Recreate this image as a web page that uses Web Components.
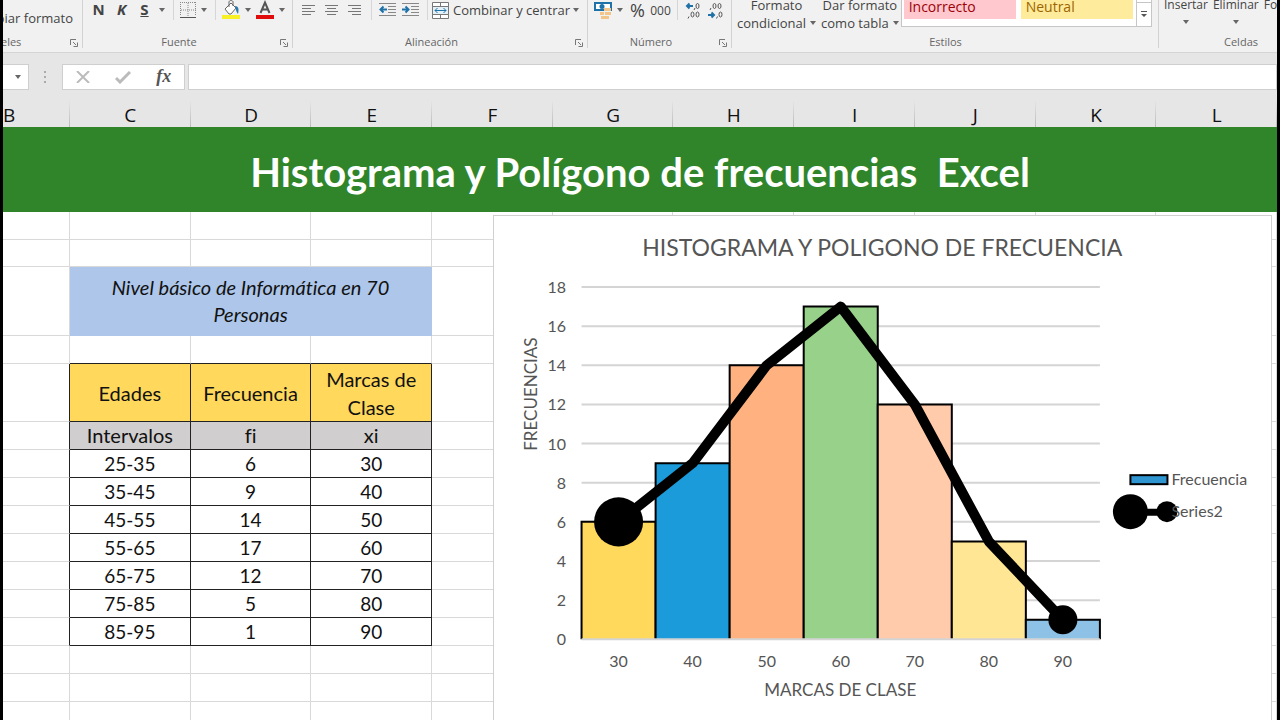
<!DOCTYPE html>
<html lang="es">
<head>
<meta charset="utf-8">
<meta name="viewport" content="width=device-width, initial-scale=1">
<title>Histograma y Polígono de frecuencias Excel</title>
<style>
  body {
    margin: 0;
    font-family: "Open Sans", "Noto Sans", sans-serif;
    font-variant-ligatures: none;
  }
</style>
</head>
<body>
<excel-window></excel-window>

<script>
const makeTemplate = (html) => {
  const template = document.createElement('template');
  template.innerHTML = html;
  return template;
};

class BaseElement extends HTMLElement {
  constructor() {
    super();
    this.attachShadow({ mode: 'open' });
    this.shadowRoot.appendChild(this.constructor.template.content.cloneNode(true));
  }
}

// Small drop-down arrow used all over the ribbon
class DropArrow extends BaseElement {
  static template = makeTemplate(`
    <style>
      :host { display: inline-flex; }
      button {
        display: flex;
        align-items: center;
        justify-content: center;
        width: 12px;
        height: 16px;
        padding: 0;
        border: 0;
        background: none;
      }
    </style>
    <button aria-label="Más opciones">
      <svg width="6" height="4" viewBox="0 0 6 4"><path d="M0 0h6L3 4z" fill="#666"/></svg>
    </button>
  `);
}

// One icon or letter button
class ToolButton extends BaseElement {
  static template = makeTemplate(`
    <style>
      :host { display: inline-flex; width: 23px; }
      :host([size="s"]) { width: 20px; }
      :host([size="m"]) { width: 22px; }
      :host([size="auto"]) { width: auto; }
      button {
        display: flex;
        flex: 1;
        align-items: center;
        justify-content: center;
        gap: 4px;
        height: 20px;
        padding: 0;
        border: 0;
        background: none;
        color: #444;
        font: inherit;
        white-space: nowrap;
      }
    </style>
    <button><slot></slot></button>
  `);

  connectedCallback() {
    if (this.title) {
      this.shadowRoot.querySelector('button').setAttribute('aria-label', this.title);
    }
  }
}

// Ribbon group: tools on top, caption and dialog launcher below
class RibbonGroup extends BaseElement {
  static template = makeTemplate(`
    <style>
      :host {
        display: flex;
        flex-direction: column;
        position: relative;
        color: #444;
        font-size: 13px;
      }
      :host::after {
        content: "";
        position: absolute;
        right: 0;
        top: 0;
        bottom: 4px;
        border-right: 1px solid #d2d2d2;
      }
      .tools { display: flex; height: 34px; box-sizing: border-box; }
      .caption {
        display: flex;
        align-items: center;
        height: 18px;
        color: #666;
        font-size: 11px;
        line-height: 14px;
      }
      .caption span { flex: 1; padding-bottom: 2px; text-align: center; }
      button {
        display: flex;
        width: 18px;
        padding: 0 0 0 5px;
        border: 0;
        background: none;
      }
      :host([plain]) button { display: none; }
    </style>
    <div class="tools"><slot></slot></div>
    <div class="caption">
      <span></span>
      <button aria-label="Opciones del grupo">
        <svg width="8" height="8" viewBox="0 0 8 8" fill="none" stroke="#777">
          <path d="M.5 6V.5H6M3 3l3 3M7.500 3.500v4h-4"/>
        </svg>
      </button>
    </div>
  `);

  connectedCallback() {
    this.shadowRoot.querySelector('span').textContent = this.getAttribute('label');
  }
}

class ExcelRibbon extends BaseElement {
  static template = makeTemplate(`
    <style>
      :host {
        display: block;
        overflow: hidden;
        background: #f1f1f1;
        border-bottom: 1px solid #d5d5d5;
      }
      .groups { display: flex; margin-left: -93px; }
      ribbon-group { flex: none; }
      .clipboard { width: 173px; }
      .font { width: 210px; }
      .align { width: 295px; }
      .number { width: 144px; }
      .styles { width: 427px; }
      .cells { width: 164px; font-size: 12px; }
      .row { display: flex; align-items: center; height: 20px; padding-left: 4px; }
      .copy { display: flex; flex: 1; align-items: center; justify-content: flex-end; padding: 2px 10px 0 0; }
      .sep { width: 10px; height: 20px; background: linear-gradient(#d6d6d6, #d6d6d6) center / 1px 100% no-repeat; }
      b, i, u { font-size: 15px; font-weight: 700; line-height: 18px; padding-bottom: 2px; }
      .percent { font-size: 18px; }
      .zeros { font-size: 12px; }
      .big {
        display: flex;
        flex-direction: column;
        align-items: center;
        margin-top: -4px;
        padding: 0;
        border: 0;
        background: none;
        color: #444;
        font: inherit;
        line-height: 18px;
        white-space: nowrap;
      }
      .big span { display: flex; align-items: center; gap: 4px; }
      .big svg { margin: 6px; }
      .big span svg { margin: 0; }
      .styles .big { margin-left: 5px; }
      .gallery {
        display: flex;
        height: 26px;
        margin-left: 2px;
        border: 1px solid #c6c6c6;
        border-top: 0;
        background: #fff;
      }
      .gallery button { border: 0; padding: 0 5px 5px; font-size: 14px; font-family: inherit; text-align: left; line-height: 14px; }
      .swatch { width: 112px; height: 19px; margin: 0 3px 0 2px; }
      .bad { background: #ffc7ce; color: #9c0006; }
      .neutral { background: #ffeb9c; color: #9c6500; }
      .gallery .more {
        display: flex;
        align-items: center;
        justify-content: center;
        width: 15px;
        padding: 2px 0 0;
        border-left: 1px solid #c6c6c6;
        background: linear-gradient(#c6c6c6, #c6c6c6) 0 2px / 100% 1px no-repeat #fff;
      }
      .cells .big { margin-left: 5px; }
    </style>
    <div class="groups">
      <ribbon-group class="clipboard" label="Portapapeles">
        <div class="copy"><tool-button size="auto">Copiar formato</tool-button></div>
      </ribbon-group>

      <ribbon-group class="font" label="Fuente">
        <div class="row">
          <tool-button title="Negrita"><b>N</b></tool-button>
          <tool-button title="Cursiva"><i>K</i></tool-button>
          <tool-button title="Subrayado"><u>S</u></tool-button>
          <drop-arrow></drop-arrow>
          <div class="sep"></div>
          <tool-button size="s" title="Bordes">
            <svg width="16" height="16" viewBox="0 0 16 16" fill="none">
              <path d="M.5 0v14M15.500 0v14M0 .5h16M8 1v14M1 8h15" stroke="#888" stroke-dasharray="1 1"/>
              <path d="M0 15.500h16" stroke="#555"/>
            </svg>
          </tool-button>
          <drop-arrow></drop-arrow>
          <div class="sep"></div>
          <tool-button size="m" title="Color de relleno">
            <svg width="18" height="20" viewBox="0 0 18 20">
              <path d="M3 9l6-6 5 5-5 6H7z" fill="#fff" stroke="#666"/>
              <path d="M7 7V2c0-2 4-2 4 0v4" fill="none" stroke="#666"/>
              <path d="M13 6c4 0 4 4 3 8-2-2-2-5-3-8z" fill="#2a7ab0"/>
              <path d="M0 15h18v4H0z" fill="#f7f026"/>
            </svg>
          </tool-button>
          <drop-arrow></drop-arrow>
          <tool-button size="m" title="Color de fuente">
            <svg width="18" height="20" viewBox="0 0 18 20">
              <path d="M4.500 13L9 2.500 13.500 13M6 9.500h6" fill="none" stroke="#555" stroke-width="2"/>
              <path d="M0 15h18v4H0z" fill="#e00b0b"/>
            </svg>
          </tool-button>
          <drop-arrow></drop-arrow>
        </div>
      </ribbon-group>

      <ribbon-group class="align" label="Alineación">
        <div class="row">
          <tool-button title="Alinear a la izquierda">
            <svg width="13" height="12" viewBox="0 0 13 12" stroke="#777"><path d="M0 1.500h13M0 4.500h9M0 7.500h13M0 10.500h9"/></svg>
          </tool-button>
          <tool-button title="Centrar">
            <svg width="13" height="12" viewBox="0 0 13 12" stroke="#777"><path d="M0 1.500h13M2 4.500h9M0 7.500h13M2 10.500h9"/></svg>
          </tool-button>
          <tool-button title="Alinear a la derecha">
            <svg width="13" height="12" viewBox="0 0 13 12" stroke="#777"><path d="M0 1.500h13M4 4.500h9M0 7.500h13M4 10.500h9"/></svg>
          </tool-button>
          <div class="sep"></div>
          <tool-button title="Disminuir sangría">
            <svg width="17" height="14" viewBox="0 0 17 14" fill="none" stroke="#888">
              <path d="M0 .5h17M9 3.500h8M9 6.500h8M9 9.500h8M0 12.500h17"/>
              <path d="M8 6.500H2M4.500 3.500L1.500 6.500l3 3" stroke="#1f72a8" stroke-width="2"/>
            </svg>
          </tool-button>
          <tool-button title="Aumentar sangría">
            <svg width="17" height="14" viewBox="0 0 17 14" fill="none" stroke="#888">
              <path d="M0 .5h17M9 3.500h8M9 6.500h8M9 9.500h8M0 12.500h17"/>
              <path d="M0 6.500h6M3.500 3.500l3 3-3 3" stroke="#1f72a8" stroke-width="2"/>
            </svg>
          </tool-button>
          <div class="sep"></div>
          <tool-button size="auto">
            <svg width="17" height="17" viewBox="0 0 17 17" fill="none" stroke="#777">
              <path d="M.5.5h16v16H.5zM8.500 0v4M8.500 13v4" fill="#fff"/>
              <path d="M.5 4.500h16v8H.5z" fill="#e3f0f8"/>
              <path d="M3 8.500h11M5.500 6L3 8.500 5.500 11M11.500 6L14 8.500 11.500 11" stroke="#1f72a8"/>
            </svg>
            Combinar y centrar
          </tool-button>
          <drop-arrow></drop-arrow>
        </div>
      </ribbon-group>

      <ribbon-group class="number" label="Número">
        <div class="row">
          <tool-button size="m" title="Formato de número de contabilidad">
            <svg width="18" height="18" viewBox="0 0 18 18">
              <path d="M0 1h18v9H0z" fill="#1f72a8"/>
              <path d="M2 3h14v5H2z" fill="#fff"/>
              <circle cx="8" cy="5.500" r="2.500" fill="#1f72a8"/>
              <path d="M10 7h7v3h-7zM6 11h4v3H6zM11 11h6v3h-6zM7 15h8v3H7z" fill="#f3c588"/>
            </svg>
          </tool-button>
          <drop-arrow></drop-arrow>
          <tool-button title="Estilo porcentual"><span class="percent">%</span></tool-button>
          <tool-button title="Estilo millares"><span class="zeros">000</span></tool-button>
          <div class="sep"></div>
          <tool-button size="m" title="Aumentar decimales">
            <svg width="16" height="17" viewBox="0 0 16 17" fill="none">
              <path d="M8 4H2M4.500 1.500L2 4l2.500 2.500" stroke="#1f72a8" stroke-width="2"/>
              <ellipse cx="12.500" cy="4" rx="1.500" ry="2.500" stroke="#555"/>
              <ellipse cx="7.500" cy="12.500" rx="1.500" ry="2.500" stroke="#555"/>
              <ellipse cx="12.500" cy="12.500" rx="1.500" ry="2.500" stroke="#555"/>
              <path d="M4 14.500l-1 2M10 6l-1 2" stroke="#555"/>
            </svg>
          </tool-button>
          <tool-button size="m" title="Disminuir decimales">
            <svg width="16" height="17" viewBox="0 0 16 17" fill="none">
              <path d="M1 13h6M4.500 10.500L7 13l-2.500 2.500" stroke="#1f72a8" stroke-width="2"/>
              <ellipse cx="7.500" cy="4" rx="1.500" ry="2.500" stroke="#555"/>
              <ellipse cx="12.500" cy="4" rx="1.500" ry="2.500" stroke="#555"/>
              <ellipse cx="13.500" cy="12.500" rx="1.500" ry="2.500" stroke="#555"/>
              <path d="M4 6l-1 2M10.500 14.500l-1 2" stroke="#555"/>
            </svg>
          </tool-button>
        </div>
      </ribbon-group>

      <ribbon-group class="styles" label="Estilos" plain>
        <button class="big">Formato
          <span>condicional <svg width="6" height="4" viewBox="0 0 6 4"><path d="M0 0h6L3 4z" fill="#666"/></svg></span>
        </button>
        <button class="big">Dar formato
          <span>como tabla <svg width="6" height="4" viewBox="0 0 6 4"><path d="M0 0h6L3 4z" fill="#666"/></svg></span>
        </button>
        <div class="gallery">
          <button class="swatch bad">Incorrecto</button>
          <button class="swatch neutral">Neutral</button>
          <button class="more" aria-label="Más estilos">
            <svg width="6" height="7" viewBox="0 0 6 7"><path d="M0 0h6v1H0zM0 3h6L3 6z" fill="#555"/></svg>
          </button>
        </div>
      </ribbon-group>

      <ribbon-group class="cells" label="Celdas" plain>
        <button class="big">Insertar<svg width="6" height="4" viewBox="0 0 6 4"><path d="M0 0h6L3 4z" fill="#666"/></svg></button>
        <button class="big">Eliminar<svg width="6" height="4" viewBox="0 0 6 4"><path d="M0 0h6L3 4z" fill="#666"/></svg></button>
        <button class="big">Formato<svg width="6" height="4" viewBox="0 0 6 4"><path d="M0 0h6L3 4z" fill="#666"/></svg></button>
      </ribbon-group>
    </div>
  `);
}

class FormulaBar extends BaseElement {
  static template = makeTemplate(`
    <style>
      :host { display: flex; height: 26px; padding: 11px 0 10px; background: #e6e6e6; }
      .box {
        display: flex;
        align-items: center;
        box-sizing: border-box;
        border: 1px solid #cfcfcf;
        background: #fff;
      }
      .name { width: 26px; border-left: 0; justify-content: flex-end; padding-right: 4px; }
      .grip { width: 33px; display: flex; align-items: center; justify-content: center; }
      .actions { width: 123px; justify-content: space-around; }
      .actions button { display: flex; padding: 0; border: 0; background: none; }
      .actions .fx { padding-bottom: 3px; color: #555; font: italic bold 18px/20px "Liberation Serif", serif; }
      input { flex: 1; min-width: 0; margin-left: 3px; border-right: 0; padding: 0 6px; font: inherit; }
    </style>
    <div class="box name"><drop-arrow></drop-arrow></div>
    <div class="grip">
      <svg width="3" height="12" viewBox="0 0 3 12"><path d="M0 0h2v2H0zM0 5h2v2H0zM0 10h2v2H0z" fill="#aaa"/></svg>
    </div>
    <div class="box actions">
      <button aria-label="Cancelar">
        <svg width="14" height="12" viewBox="0 0 14 12" fill="none" stroke="#bbb" stroke-width="2"><path d="M1 0l12 12M13 0L1 12"/></svg>
      </button>
      <button aria-label="Introducir">
        <svg width="16" height="13" viewBox="0 0 16 13" fill="none" stroke="#bbb" stroke-width="3"><path d="M1 7l4 4L15 1"/></svg>
      </button>
      <button class="fx" aria-label="Insertar función">fx</button>
    </div>
    <input class="box" type="text" aria-label="Barra de fórmulas">
  `);
}

class ColumnHeaders extends BaseElement {
  static template = makeTemplate(`
    <style>
      :host {
        display: grid;
        grid-template-columns: 67px repeat(10, 1fr);
        height: 27px;
        background: #e6e6e6;
        color: #111;
        font-size: 19px;
        line-height: 31px;
        text-align: center;
      }
      span { background: linear-gradient(#e6e6e6, #b4b4b4) right / 1px 100% no-repeat; }
      span:first-of-type { text-align: left; }
    </style>
  `);

  connectedCallback() {
    for (const letter of 'BCDEFGHIJKL') {
      const cell = document.createElement('span');
      cell.textContent = letter;
      this.shadowRoot.appendChild(cell);
    }
  }
}

class TitleBanner extends BaseElement {
  static template = makeTemplate(`
    <style>
      :host {
        display: flex;
        align-items: center;
        justify-content: center;
        height: 85px;
        background: #30852a;
        color: #fff;
      }
      h1 {
        margin: 0;
        padding-top: 4px;
        font: bold 40px/48px Lato, "Open Sans", sans-serif;
        font-variant-ligatures: none;
        white-space: pre;
      }
    </style>
    <h1><slot></slot></h1>
  `);
}

class SheetGrid extends BaseElement {
  static template = makeTemplate(`
    <style>
      :host { display: block; }
      table {
        width: 100%;
        table-layout: fixed;
        border-collapse: separate;
        border-spacing: 0;
        color: #111;
        font: 19px/28px Lato, "Open Sans", sans-serif;
        font-variant-ligatures: none;
        text-align: center;
      }
      .first { width: 67px; }
      tr { height: 28px; }
      .short { height: 27px; }
      .merged { height: 69px; }
      .head { height: 58px; }
      th, td {
        box-sizing: border-box;
        padding: 0;
        border: solid #d9d9d9;
        border-width: 0 1px 1px 0;
        font-weight: normal;
        line-height: 27px;
      }
      th, .level { font-size: 20px; }
      .level { border-color: #adc6e9; background: #adc6e9; font-style: italic; }
      .head th { border-color: #222; background: #ffd85c; line-height: 28px; }
      .sub th { border-color: #222; background: #d0cece; }
      .cell { border-color: #222; }
      .edge-right { border-right-color: #222; }
      .edge-bottom { border-bottom-color: #222; }
    </style>
    <table>
      <colgroup><col class="first"><col span="10"></colgroup>
      <tbody></tbody>
    </table>
  `);

  connectedCallback() {
    const body = this.shadowRoot.querySelector('tbody');
    const blank = (n, cls = '') => `<td class="${cls}"></td>`.repeat(n);
    const data = [
      ['25-35', 6, 30],
      ['35-45', 9, 40],
      ['45-55', 14, 50],
      ['55-65', 17, 60],
      ['65-75', 12, 70],
      ['75-85', 5, 80],
      ['85-95', 1, 90],
    ];
    const rows = [
      `<tr>${blank(11)}</tr>`,
      `<tr class="short">${blank(11)}</tr>`,
      `<tr class="merged">${blank(1)}<td class="level" colspan="3">Nivel básico de Informática en 70<br>Personas</td>${blank(7)}</tr>`,
      `<tr>${blank(1)}${blank(3, 'edge-bottom')}${blank(7)}</tr>`,
      `<tr class="head">${blank(1, 'edge-right')}<th>Edades</th><th>Frecuencia</th><th>Marcas de<br>Clase</th>${blank(7)}</tr>`,
      `<tr class="sub">${blank(1, 'edge-right')}<th>Intervalos</th><th>fi</th><th>xi</th>${blank(7)}</tr>`,
      ...data.map((values, i) => `<tr class="${i === 3 ? 'short' : ''}">${blank(1, 'edge-right')}${values.map((v) => `<td class="cell">${v}</td>`).join('')}${blank(7)}</tr>`),
      ...Array(3).fill(`<tr>${blank(11)}</tr>`),
    ];
    body.innerHTML = rows.join('');
  }
}

class FrequencyChart extends BaseElement {
  static template = makeTemplate(`
    <style>
      :host { display: block; border: 1px solid #d0d0d0; background: #fff; }
      svg { display: block; width: 100%; height: auto; }
      text { fill: #555; font: 16px Lato, "Open Sans", sans-serif; }
      .title { font-size: 23px; text-anchor: middle; }
      .axis-title { font-size: 17px; text-anchor: middle; }
      .tick-x { text-anchor: middle; }
      .tick-y { text-anchor: end; }
      .grid { stroke: #d4d4d4; stroke-width: 2; }
      .bar { stroke: #000; stroke-width: 2; }
      .line { fill: none; stroke: #000; stroke-width: 10; stroke-linejoin: round; }
    </style>
    <svg viewBox="0 0 776 520" role="img" aria-label="Histograma y polígono de frecuencia"></svg>
  `);

  connectedCallback() {
    const values = [6, 9, 14, 17, 12, 5, 1];
    const colors = ['#ffd95c', '#1b9bd9', '#ffb280', '#98d28a', '#ffcbab', '#ffe694', '#8dc1e6'];
    const left = 87.5;
    const right = 605.5;
    const bottom = 423;
    const step = (right - left) / values.length;
    const y = (v) => bottom - v * 352 / 18;
    const center = (i) => left + step * (i + 0.5);

    let out = '<text class="title" x="388" y="40">HISTOGRAMA Y POLIGONO DE FRECUENCIA</text>';
    for (let v = 0; v <= 18; v += 2) {
      out += `<text class="tick-y" x="72" y="${y(v) + 6}">${v}</text>`;
      if (v > 0) out += `<path class="grid" d="M${left} ${y(v)}H${right}"/>`;
    }
    values.forEach((v, i) => {
      out += `<path class="bar" d="M${left + step * i} ${bottom}V${y(v)}h${step}V${bottom}" fill="${colors[i]}"/>`;
      out += `<text class="tick-x" x="${center(i)}" y="451">${30 + i * 10}</text>`;
    });
    out += `<path class="grid" d="M${left} ${bottom}H${right}"/>`;
    out += `<polyline class="line" points="${values.map((v, i) => `${center(i)},${y(v)}`).join(' ')}"/>`;
    out += `<circle cx="${center(0)}" cy="${y(6)}" r="24.500"/><circle cx="${center(6)}" cy="${y(1)}" r="14.500"/>`;
    out += '<text class="axis-title" x="346" y="480">MARCAS DE CLASE</text>';
    out += '<text class="axis-title" transform="translate(43 178) rotate(-90)">FRECUENCIAS</text>';

    // legend
    out += `
      <rect class="bar" x="636" y="259" width="37" height="9" fill="#2f95d0"/>
      <text x="677" y="269">Frecuencia</text>
      <path d="M636 296h36" stroke="#000" stroke-width="7"/>
      <circle cx="636" cy="295.500" r="17.500"/>
      <circle cx="672.500" cy="295.500" r="10.500"/>
      <text x="677" y="301">Series2</text>`;
    this.shadowRoot.querySelector('svg').innerHTML = out;
  }
}

class ExcelWindow extends BaseElement {
  static template = makeTemplate(`
    <style>
      :host {
        display: flex;
        flex-direction: column;
        box-sizing: border-box;
        height: 100vh;
        overflow: hidden;
        border: solid #000;
        border-width: 0 3px;
        background: #fff;
      }
      excel-ribbon, formula-bar, column-headers, title-banner { flex: none; }
      main { flex: 1; min-height: 0; position: relative; }
      /* the chart floats over the cells */
      frequency-chart { position: absolute; top: 3px; left: 38.500%; right: 5px; }
    </style>
    <excel-ribbon></excel-ribbon>
    <formula-bar></formula-bar>
    <column-headers></column-headers>
    <title-banner>Histograma y Polígono de frecuencias  Excel</title-banner>
    <main>
      <sheet-grid></sheet-grid>
      <frequency-chart></frequency-chart>
    </main>
  `);
}

customElements.define('drop-arrow', DropArrow);
customElements.define('tool-button', ToolButton);
customElements.define('ribbon-group', RibbonGroup);
customElements.define('excel-ribbon', ExcelRibbon);
customElements.define('formula-bar', FormulaBar);
customElements.define('column-headers', ColumnHeaders);
customElements.define('title-banner', TitleBanner);
customElements.define('sheet-grid', SheetGrid);
customElements.define('frequency-chart', FrequencyChart);
customElements.define('excel-window', ExcelWindow);
</script>
</body>
</html>
